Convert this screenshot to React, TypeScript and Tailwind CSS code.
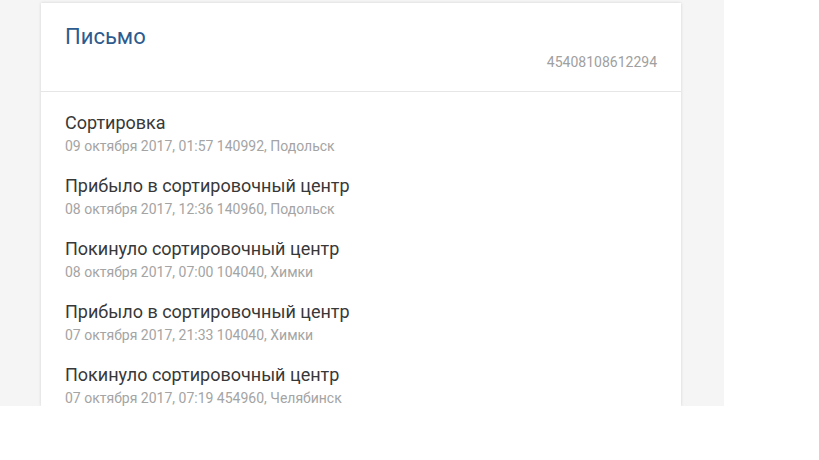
import React from 'react';

const events = [
  { title: 'Сортировка', meta: '09 октября 2017, 01:57 140992, Подольск' },
  { title: 'Прибыло в сортировочный центр', meta: '08 октября 2017, 12:36 140960, Подольск' },
  { title: 'Покинуло сортировочный центр', meta: '08 октября 2017, 07:00 104040, Химки' },
  { title: 'Прибыло в сортировочный центр', meta: '07 октября 2017, 21:33 104040, Химки' },
  { title: 'Покинуло сортировочный центр', meta: '07 октября 2017, 07:19 454960, Челябинск' },
];

export default function App() {
  return (
    <div className="w-[819px] h-[460px] bg-white font-['Roboto',sans-serif]">
      <div className="w-[724px] h-[406px] bg-[#f5f5f5] overflow-hidden pl-[41px] pt-[3px]">
        <div className="w-[640px] h-full bg-white shadow-[0_0_3px_rgba(0,0,0,0.14)]">
          {/* Header */}
          <div className="px-6 pt-5 pb-[21px] border-b border-[#e6e6e6]">
            <h1 className="text-[22px] leading-[28px] text-[#2d5b8e]">Письмо</h1>
            <div className="mt-[3px] text-right text-[14px] leading-4 text-[#a0a0a0]">45408108612294</div>
          </div>

          {/* Tracking history */}
          <div className="px-6 pt-5 flex flex-col gap-5">
            {events.map((e, i) => (
              <div key={i}>
                <div className="text-[18px] leading-[22px] text-[#383838]">{e.title}</div>
                <div className="mt-[3px] text-[14px] leading-[18px] text-[#a4a4a4]">{e.meta}</div>
              </div>
            ))}
          </div>
        </div>
      </div>
    </div>
  );
}
